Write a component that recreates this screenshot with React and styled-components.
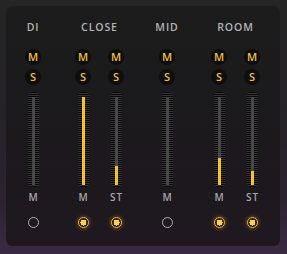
import React from "react";
import styled, { createGlobalStyle } from "styled-components";

const Global = createGlobalStyle`
  html, body { margin: 0; padding: 0; }
  body {
    width: 287px; height: 254px; overflow: hidden;
    background: linear-gradient(to bottom, #252525 0%, #262328 45%, #2c2331 80%, #3a2b42 100%);
    font-family: "Open Sans", "Noto Sans", sans-serif;
  }
`;

const Panel = styled.div`
  box-sizing: border-box;
  margin: 6px 0 0 6px;
  width: 274px;
  height: 240px;
  border-radius: 6px;
  background: linear-gradient(to bottom, #1c1c1c 0%, #1b1a1c 40%, #1d181e 75%, #1f1820 100%);
  display: flex;
  padding: 15px 12px 0 11px;
`;

const Group = styled.div`
  display: flex;
  flex-direction: column;
  align-items: center;
  margin-right: ${(p) => p.$mr || 0}px;
`;

const Title = styled.div`
  font-size: 10.5px;
  line-height: 12px;
  height: 12px;
  font-weight: 600;
  letter-spacing: 0.9px;
  color: #b4b4b4;
`;

const Strips = styled.div`
  display: flex;
  gap: 1px;
  margin-top: 16px;
`;

const Strip = styled.div`
  width: 32px;
  display: flex;
  flex-direction: column;
  align-items: center;
`;

const Btn = styled.div`
  width: 16px;
  height: 16px;
  border-radius: 50%;
  background: #0e0e0e;
  color: #eebd4c;
  font-size: 11px;
  font-weight: 600;
  line-height: 16px;
  text-align: center;
  margin-bottom: 4px;
`;

const Meter = styled.div`
  margin-top: 3px;
  width: 11px;
  height: 95px;
  box-sizing: border-box;
  border-radius: 4px;
  background: repeating-linear-gradient(to bottom, #0a0a0a 0px, #0a0a0a 1px, #333333 1px, #333333 2px);
  display: flex;
  flex-direction: column;
  align-items: center;
  padding: 5px 0 2px;
`;

const Channel = styled.div`
  width: 3px;
  flex: 1;
  background: #474747;
  display: flex;
  flex-direction: column;
  justify-content: flex-end;
`;

const Fill = styled.div`
  width: 3px;
  background: #f6c232;
`;

const Label = styled.div`
  margin-top: 5px;
  font-size: 10px;
  line-height: 10px;
  height: 10px;
  font-weight: 600;
  letter-spacing: 1px;
  padding-left: 1px;
  color: #a6a6a6;
`;

const Led = styled.div`
  margin-top: 15px;
  box-sizing: border-box;
  width: 11px;
  height: 11px;
  border-radius: 50%;
  border: ${(p) => (p.$on ? "1.5px solid #f4b83a" : "1px solid #b0b0b0")};
  background: ${(p) => (p.$on ? "radial-gradient(circle, #ffd04a 0 3px, #3a2a10 3px 3.6px, transparent 3.6px)" : "transparent")};
  box-shadow: ${(p) => (p.$on ? "0 0 4px rgba(245, 180, 40, 0.55)" : "none")};
`;

const Divider = styled.div`
  width: 1px;
  margin: 3px 9px 14px 9px;
  background: #252427;
`;

function ChannelStrip({ label, level, on }) {
  return (
    <Strip>
      <Btn>M</Btn>
      <Btn>S</Btn>
      <Meter>
        <Channel>
          <Fill style={{ height: `${level}%` }} />
        </Channel>
      </Meter>
      <Label>{label}</Label>
      <Led $on={on} />
    </Strip>
  );
}

const groups = [
  { title: "DI", mr: 0, strips: [{ label: "M", level: 0, on: false }] },
  {
    title: "CLOSE",
    mr: 19,
    strips: [
      { label: "M", level: 100, on: true },
      { label: "ST", level: 22, on: true },
    ],
  },
  { title: "MID", mr: 20, strips: [{ label: "M", level: 0, on: false }] },
  {
    title: "ROOM",
    mr: 0,
    strips: [
      { label: "M", level: 31, on: true },
      { label: "ST", level: 16, on: true },
    ],
  },
];

export default function App() {
  return (
    <>
      <Global />
      <Panel>
        {groups.map((g, i) => (
          <React.Fragment key={g.title}>
            <Group $mr={g.mr}>
              <Title>{g.title}</Title>
              <Strips>
                {g.strips.map((s, j) => (
                  <ChannelStrip key={j} {...s} />
                ))}
              </Strips>
            </Group>
            {i === 0 && <Divider />}
          </React.Fragment>
        ))}
      </Panel>
    </>
  );
}
